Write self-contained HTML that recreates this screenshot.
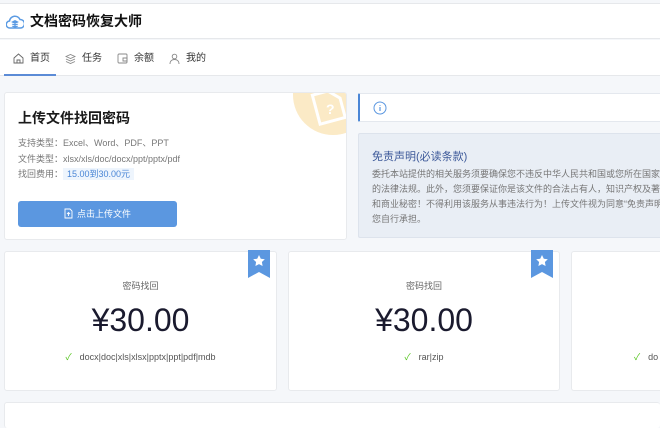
<!DOCTYPE html>
<html><head><meta charset="utf-8">
<style>
*{margin:0;padding:0;box-sizing:border-box}
html,body{width:660px;height:428px;overflow:hidden}
body{background:#f5f7fa;font-family:"Liberation Sans","Noto Sans CJK SC",sans-serif;position:relative;color:#333}
.abs{position:absolute}
.hdr{left:0;top:3px;width:660px;height:36px;background:#fff;border-bottom:1px solid #e6e8eb;border-top:1px solid #e6e8eb}
.nav{left:0;top:40px;width:660px;height:36px;background:#fff;border-bottom:1px solid #e6e8eb}
.tab{position:absolute;top:1px;height:36px;line-height:36px;font-size:10px;color:#333}
.tab svg{position:absolute;top:12px;left:0}
.tab span{position:absolute;left:17px;white-space:nowrap}
.card{background:#fff;border:1px solid #e8eaed;border-radius:3px}
.pc .t{position:absolute;top:27px;width:100%;text-align:center;font-size:9px;color:#666}
.pc .p{position:absolute;top:50px;width:100%;text-align:center;font-size:32px;color:#1a1a2e}
.pc .f{position:absolute;top:98px;width:100%;text-align:center;font-size:9px;color:#555;white-space:nowrap}
.rib{position:absolute;top:-2px;width:22px;height:28px}
</style></head><body>
<div class="abs hdr">
 <svg class="abs" style="left:6px;top:10px" width="18" height="16" viewBox="0 0 18 16"><path d="M4 14a3.5 3.5 0 0 1 -.5-7 5.5 5.5 0 0 1 10.5-1.5 4 4 0 0 1 .5 8.5z" fill="none" stroke="#5b9be3" stroke-width="1.5"/><path d="M6 8l3-1.5 3 1.5-3 1.5z M6 10l3 1.5 3-1.5 M6 12l3 1.5 3-1.5" fill="#5b9be3" stroke="#5b9be3" stroke-width=".8"/></svg>
 <div class="abs" style="left:30px;top:7px;font-size:14px;font-weight:bold;color:#111">文档密码恢复大师</div>
</div>
<div class="abs nav">
 <div class="tab" style="left:13px"><svg width="11" height="11" viewBox="0 0 11 11"><path d="M1 5L5.5 1 10 5v5H1z M4 10V7h3v3" fill="none" stroke="#666" stroke-width=".9"/></svg><span>首页</span></div>
 <div class="tab" style="left:65px"><svg width="11" height="11" viewBox="0 0 11 11"><path d="M1 3.5l4.5-2 4.5 2-4.5 2z M1 6l4.5 2 4.5-2 M1 8.5l4.5 2 4.5-2" fill="none" stroke="#888" stroke-width=".9"/></svg><span>任务</span></div>
 <div class="tab" style="left:117px"><svg width="11" height="11" viewBox="0 0 11 11"><rect x="1" y="1" width="9" height="9" rx="1" fill="none" stroke="#888" stroke-width=".9"/><path d="M6 5h4v3H6z" fill="none" stroke="#888" stroke-width=".9"/></svg><span>余额</span></div>
 <div class="tab" style="left:169px"><svg width="11" height="11" viewBox="0 0 11 11"><circle cx="5.5" cy="3.5" r="2.3" fill="none" stroke="#888" stroke-width=".9"/><path d="M1 11c0-3 2-4.5 4.5-4.5S10 8 10 11" fill="none" stroke="#888" stroke-width=".9"/></svg><span>我的</span></div>
 <div class="abs" style="left:4px;top:34px;width:52px;height:2px;background:#5b8bd6"></div>
</div>

<div class="abs card" style="left:4px;top:92px;width:343px;height:148px;overflow:hidden">
 <div class="abs" style="left:288px;top:-38px;width:80px;height:80px;border-radius:50%;background:#fbeac6"></div>
 <svg class="abs" style="left:305px;top:-6px" width="40" height="40" viewBox="0 0 40 40"><path d="M6 4h16l10 10v20H6z" fill="none" stroke="#fff" stroke-width="3" transform="rotate(-15 20 20)"/><text x="16" y="27" font-size="14" font-weight="bold" fill="#fff" font-family="Liberation Sans">?</text></svg>
 <div class="abs" style="left:13px;top:15px;font-size:14px;font-weight:bold;color:#1a1a1a">上传文件找回密码</div>
 <div class="abs" style="left:13px;top:43px;font-size:9px;color:#777;line-height:15.5px;white-space:nowrap">支持类型：Excel、Word、PDF、PPT<br>文件类型：xlsx/xls/doc/docx/ppt/pptx/pdf<br>找回费用：<span style="background:#eef5fd;color:#4a86d6;padding:1px 4px">15.00到30.00元</span></div>
 <div class="abs" style="left:13px;top:108px;width:159px;height:26px;background:#5b97e0;border-radius:3px;color:#fff;font-size:9px;text-align:center;line-height:26px">
  <svg style="vertical-align:-2px;margin-right:4px" width="9" height="11" viewBox="0 0 9 11"><path d="M1 1h5l2 2v7H1z M4.5 8V4.5 M3 6l1.5-1.5L6 6" fill="none" stroke="#fff" stroke-width=".9"/></svg>点击上传文件</div>
</div>

<div class="abs" style="left:358px;top:93px;width:302px;height:29px;background:#fff;border:1px solid #e4e8ee;border-right:none;border-left:2px solid #4a86d6;border-radius:2px 0 0 2px">
 <svg class="abs" style="left:13px;top:7px" width="14" height="14" viewBox="0 0 14 14"><circle cx="7" cy="7" r="6" fill="none" stroke="#5b97e0" stroke-width="1"/><path d="M7 6v4M7 4v.8" stroke="#5b97e0" stroke-width="1.2"/></svg>
</div>
<div class="abs" style="left:358px;top:133px;width:302px;height:105px;background:#e9eef5;border:1px solid #dde3ec;border-right:none;border-radius:2px 0 0 2px;overflow:hidden">
 <div class="abs" style="left:13px;top:14px;font-size:11px;color:#3e5a9a;white-space:nowrap">免责声明(必读条款)</div>
 <div class="abs" style="left:13px;top:33px;font-size:9px;color:#777;line-height:15px;white-space:nowrap">委托本站提供的相关服务须要确保您不违反中华人民共和国或您所在国家<br>的法律法规。此外，您须要保证你是该文件的合法占有人，知识产权及著<br>和商业秘密！不得利用该服务从事违法行为！上传文件视为同意“免责声明<br>您自行承担。</div>
</div>

<div class="abs card pc" style="left:4px;top:251px;width:273px;height:140px">
 <svg class="rib" style="left:243px" viewBox="0 0 22 28"><path d="M0 0h22v28l-11-6-11 6z" fill="#5b97e0"/><path d="M11 5l1.8 3.7 4 .5-2.9 2.8.7 4-3.6-1.9-3.6 1.9.7-4-2.9-2.8 4-.5z" fill="#fff"/></svg>
 <div class="t">密码找回</div><div class="p">¥30.00</div>
 <div class="f"><span style="color:#52c41a;margin-right:8px">✓</span>docx|doc|xls|xlsx|pptx|ppt|pdf|mdb</div>
</div>
<div class="abs card pc" style="left:288px;top:251px;width:272px;height:140px">
 <svg class="rib" style="left:242px" viewBox="0 0 22 28"><path d="M0 0h22v28l-11-6-11 6z" fill="#5b97e0"/><path d="M11 5l1.8 3.7 4 .5-2.9 2.8.7 4-3.6-1.9-3.6 1.9.7-4-2.9-2.8 4-.5z" fill="#fff"/></svg>
 <div class="t">密码找回</div><div class="p">¥30.00</div>
 <div class="f"><span style="color:#52c41a;margin-right:8px">✓</span>rar|zip</div>
</div>
<div class="abs card pc" style="left:571px;top:251px;width:89px;height:140px;border-right:none;border-radius:3px 0 0 3px;overflow:hidden">
 <div class="f" style="text-align:left;left:62px"><span style="color:#52c41a;margin-right:8px">✓</span>do</div>
</div>
<div class="abs card" style="left:4px;top:402px;width:656px;height:26px;border-right:none;border-bottom:none"></div>
</body></html>
